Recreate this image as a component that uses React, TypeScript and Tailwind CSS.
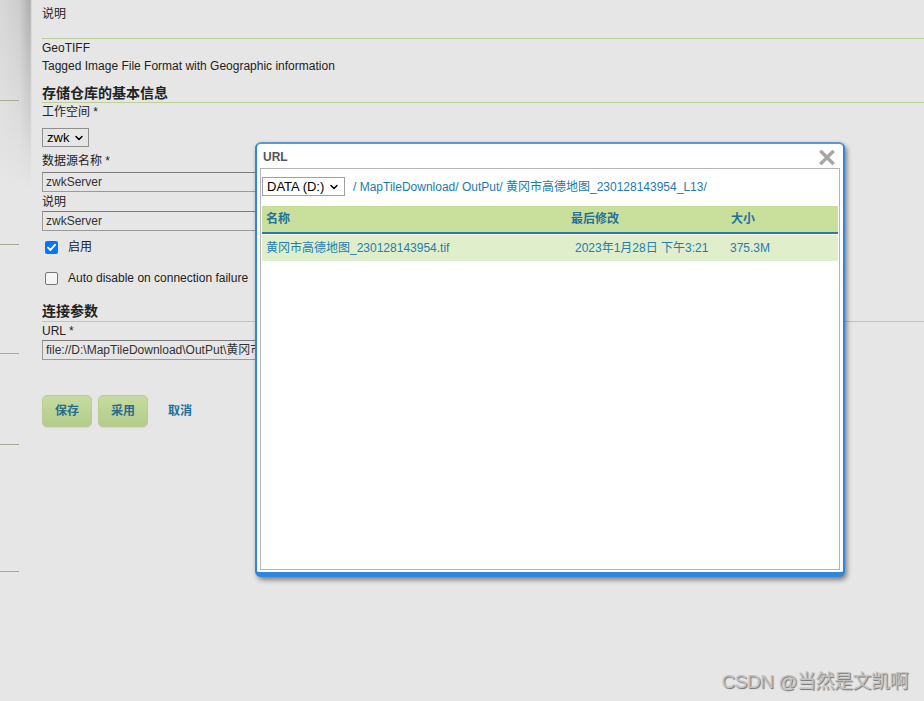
import { ChevronDown } from 'lucide-react';

function Checkbox({ checked }: { checked?: boolean }) {
    if (checked) {
        return (
            <span className="w-[13px] h-[13px] rounded-[2px] bg-[#0075ff] flex items-center justify-center">
                <svg width="11" height="11" viewBox="0 0 11 11">
                    <path d="M2 5.6 L4.4 8 L9 2.8" fill="none" stroke="#fff" strokeWidth="1.9" strokeLinecap="round" strokeLinejoin="round" />
                </svg>
            </span>
        );
    }
    return <span className="w-[13px] h-[13px] rounded-[2px] border border-[#767676] bg-[#f5f5f5]" />;
}

function GreenButton({ label }: { label: string }) {
    return (
        <button className="w-[50px] h-[32px] rounded-[5px] border border-[#b7cd93] bg-[linear-gradient(to_bottom,#c6dba0,#b5cc8a)] text-[12px] font-bold text-[#2a6c8c] shadow-[0_1px_0_rgba(0,0,0,0.08)]">
            {label}
        </button>
    );
}

export default function App() {
    return (
        <div className="relative w-[924px] h-[701px] overflow-hidden bg-[#e6e6e6] text-[12px] text-[#222] font-['Liberation_Sans','Noto_Sans_CJK_SC',sans-serif]">
            <div className="flex h-full">

                {/* Left strip with panel shadow */}
                <div className="w-[32px] shrink-0 flex flex-col bg-[linear-gradient(to_bottom,rgba(230,230,230,0)_0px,#e6e6e6_190px),linear-gradient(to_right,#d8d8d8_0%,#cdcdcd_60%,#adadad_94%,#e6e6e6_100%)]">
                    <div className="w-[19px] h-px bg-[#a3ad92] mt-[100px]" />
                    <div className="w-[19px] h-px bg-[#a3ad92] mt-[143px]" />
                    <div className="w-[19px] h-px bg-[#a3ad92] mt-[108px]" />
                    <div className="w-[19px] h-px bg-[#a3ad92] mt-[90px]" />
                    <div className="w-[19px] h-px bg-[#a3ad92] mt-[126px]" />
                </div>

                {/* Form */}
                <div className="flex-1 min-w-0 flex flex-col pl-[10px]">
                    <div className="h-[28px] flex items-center">说明</div>
                    <div className="mt-[10px] h-px bg-[#bccf96]" />
                    <div className="leading-[18px]">GeoTIFF</div>
                    <div className="leading-[18px]">Tagged Image File Format with Geographic information</div>
                    <div className="mt-[9px] leading-[18px] text-[14px] font-bold">存储仓库的基本信息</div>
                    <div className="h-px bg-[#bccf96]" />
                    <div className="mt-px leading-[16px]">工作空间 *</div>
                    <div className="mt-[8px] w-[47px] h-[19px] border border-[#8f8f8f] flex items-center justify-between pl-[4px] pr-[3px] text-[13px] text-black">
                        <span className="leading-none whitespace-nowrap">zwk</span>
                        <ChevronDown className="w-[12px] h-[12px]" strokeWidth={3} />
                    </div>
                    <div className="mt-[6px] leading-[16px]">数据源名称 *</div>
                    <div className="mt-[3px] w-[600px] h-[20px] border border-[#9a9a9a] border-t-[#7d7d7d] flex items-center px-[3px] text-[12px] text-[#333]">zwkServer</div>
                    <div className="mt-px leading-[18px]">说明</div>
                    <div className="w-[600px] h-[20px] border border-[#9a9a9a] border-t-[#7d7d7d] flex items-center px-[3px] text-[12px] text-[#333]">zwkServer</div>
                    <div className="mt-[6px] h-[20px] flex items-center pl-[3px] gap-[10px]">
                        <Checkbox checked />
                        <span>启用</span>
                    </div>
                    <div className="mt-[11px] h-[20px] flex items-center pl-[3px] gap-[10px]">
                        <Checkbox />
                        <span>Auto disable on connection failure</span>
                    </div>
                    <div className="mt-[14px] leading-[18px] text-[14px] font-bold">连接参数</div>
                    <div className="mt-px h-px bg-[#bccf96]" />
                    <div className="leading-[18px]">URL *</div>
                    <div className="w-[600px] h-[20px] border border-[#9a9a9a] border-t-[#7d7d7d] flex items-center px-[3px] text-[12px] text-[#333] whitespace-nowrap">
                        file://D:\MapTileDownload\OutPut\黄冈市高德地图_230128143954_L13\黄冈市高德地图_230128143954.tif
                    </div>
                    <div className="mt-[35px] flex items-center gap-[6px]">
                        <GreenButton label="保存" />
                        <GreenButton label="采用" />
                        <span className="ml-[14px] font-bold text-[#226f98]">取消</span>
                    </div>
                </div>
            </div>

            {/* URL picker dialog */}
            <div className="absolute left-[255px] top-[142px] w-[590px] h-[435px] rounded-[6px] border-x-2 border-t-2 border-b-[5px] border-[#2f86dc] border-t-[#5d96d2] bg-white shadow-[2px_3px_5px_rgba(0,0,0,0.45)] flex flex-col px-[3px] pb-[2px]">
                <div className="h-[24px] shrink-0 flex items-center justify-between pl-[3px] pr-[4px]">
                    <span className="font-bold text-[#555] pt-[1px]">URL</span>
                    <svg width="16" height="15" viewBox="0 0 16 15" className="mt-[2px] mr-[1px]">
                        <path d="M2.5 2 L13.5 13 M13.5 2 L2.5 13" stroke="#a6a6a6" strokeWidth="3.4" strokeLinecap="square" />
                    </svg>
                </div>
                <div className="flex-1 border border-[#b5b5b5] px-px flex flex-col">
                    <div className="mt-[8px] flex items-center">
                        <div className="w-[83px] h-[19px] border border-[#a0a0a0] flex items-center justify-between pl-[4px] pr-[4px] text-[13px] text-black">
                            <span className="leading-none whitespace-nowrap">DATA (D:)</span>
                            <ChevronDown className="w-[12px] h-[12px] shrink-0" strokeWidth={3} />
                        </div>
                        <span className="ml-[8px] text-[#247aa8] whitespace-nowrap">/ MapTileDownload/ OutPut/ 黄冈市高德地图_230128143954_L13/</span>
                    </div>
                    <div className="mt-[10px] h-[28px] bg-[#c8e09c] border-b-2 border-[#2a7aa6] flex items-center font-bold text-[#22719a]">
                        <span className="w-[309px] pl-[4px]">名称</span>
                        <span className="w-[160px]">最后修改</span>
                        <span>大小</span>
                    </div>
                    <div className="mt-px h-[26px] bg-[#e0eecb] flex items-center text-[#247db0]">
                        <span className="w-[313px] pl-[4px]">黄冈市高德地图_230128143954.tif</span>
                        <span className="w-[155px]">2023年1月28日 下午3:21</span>
                        <span>375.3M</span>
                    </div>
                </div>
            </div>

            {/* Watermark */}
            <div className="absolute right-[16px] top-[668px] text-[19px] text-[#c2c2c2] [text-shadow:1px_1px_1px_#6f6f6f] font-['Liberation_Sans','Noto_Sans_CJK_SC',sans-serif] tracking-[-0.5px]">
                CSDN @当然是文凯啊
            </div>
        </div>
    );
}
